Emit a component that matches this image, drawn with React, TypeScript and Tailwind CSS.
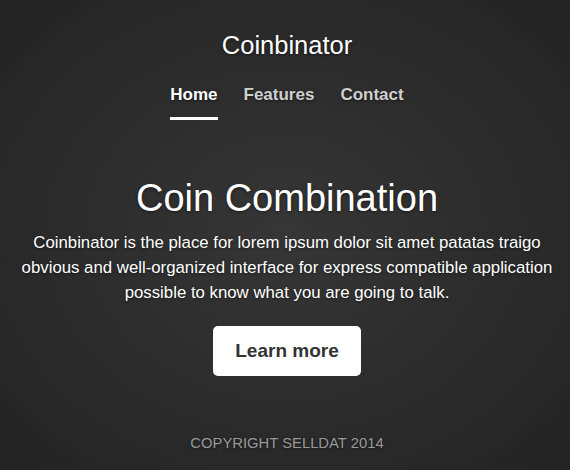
export default function App() {
  const links = ["Home", "Features", "Contact"];

  return (
    <div
      className="flex h-[470px] w-full flex-col items-center bg-[radial-gradient(ellipse_at_center,#363636_0%,#232323_100%)] pl-[4px] text-white [text-shadow:0_1px_3px_rgba(0,0,0,0.5)]"
      style={{ fontFamily: '"Liberation Sans", Arial, sans-serif' }}
    >
      <header className="flex flex-col items-center pt-[29px]">
        <h3 className="text-[25.5px] leading-[32px]">Coinbinator</h3>
        <nav className="mt-[18px] flex gap-[26px]">
          {links.map((link, i) => (
            <a
              key={link}
              href="#"
              className={
                "border-b-[3px] pt-[6px] pb-[12px] text-[17px] font-bold leading-[20px] " +
                (i === 0
                  ? "border-white text-white"
                  : "border-transparent text-[#cfcfcf]")
              }
            >
              {link}
            </a>
          ))}
        </nav>
      </header>

      <main className="mt-[56px] flex flex-col items-center px-2 text-center">
        <h1 className="text-[38px] leading-[44px]">Coin Combination</h1>
        <p className="mt-[10px] whitespace-nowrap text-[16.8px] leading-[25px]">
          Coinbinator is the place for lorem ipsum dolor sit amet patatas traigo
          <br />
          obvious and well-organized interface for express compatible application
          <br />
          possible to know what you are going to talk.
        </p>
        <button className="mt-[21px] h-[50px] w-[148px] rounded-[5px] bg-white text-[19px] font-bold text-[#333] [text-shadow:none]">
          Learn more
        </button>
      </main>

      <footer className="mt-auto pb-[17px] text-[14.8px] leading-[20px] text-[#999]">
        COPYRIGHT SELLDAT 2014
      </footer>
    </div>
  );
}
